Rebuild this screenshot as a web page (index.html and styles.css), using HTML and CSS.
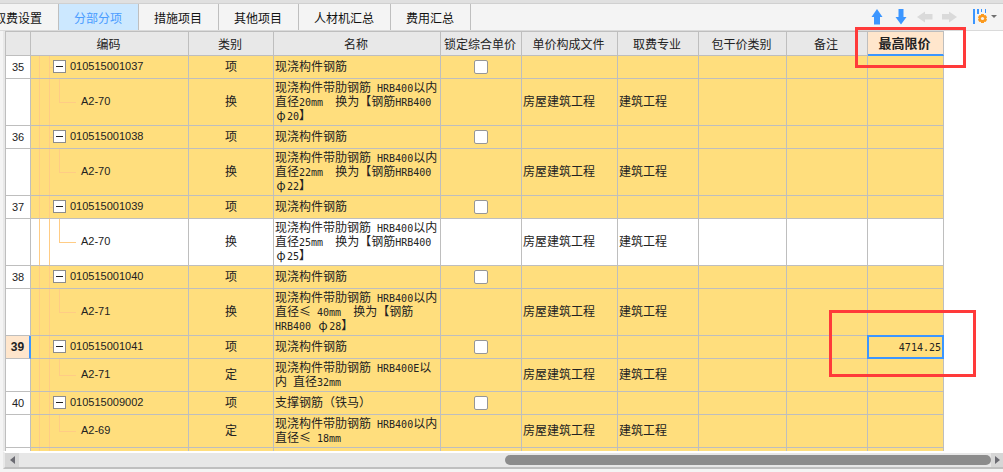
FILE: index.html
```html
<!DOCTYPE html>
<html lang="zh-CN">
<head>
<meta charset="utf-8">
<title>分部分项</title>
<link rel="stylesheet" href="styles.css">
</head>
<body>
<div class="app">
  <header class="toolbar">
    <nav class="tabs">
      <button class="tab">取费设置</button>
      <button class="tab active">分部分项</button>
      <button class="tab">措施项目</button>
      <button class="tab">其他项目</button>
      <button class="tab">人材机汇总</button>
      <button class="tab">费用汇总</button>
    </nav>
    <div class="tools">
      <button class="tool" aria-label="上移"><svg width="16" height="16" viewBox="0 0 16 16"><path fill="#3c96ff" d="M8 0 13.500 8H11v7.500H5V8H2.500z"/></svg></button>
      <button class="tool" aria-label="下移"><svg width="16" height="16" viewBox="0 0 16 16"><path fill="#3c96ff" d="M5.500 0h5v8h3L8 15.500 2.500 8h3z"/></svg></button>
      <button class="tool" aria-label="左移"><svg width="16" height="16" viewBox="0 0 16 16"><path fill="#dadada" d="M0 8 8 2.500V5h7.500v5.500H8V13.500z"/></svg></button>
      <button class="tool" aria-label="右移"><svg width="16" height="16" viewBox="0 0 16 16"><path fill="#dadada" d="M16 8 8 2.500V5H1v5.500H8V13.500z"/></svg></button>
      <button class="tool settings" aria-label="列设置"><svg width="24" height="16" viewBox="0 0 24 16"><path fill="#3c96ff" d="M0 0h2v15H0zM4 0h2v5H4zM8 0h1v3H8zM12 0h1v4h-1z"/><g fill="#fb9a1e"><circle cx="9.500" cy="9.500" r="3.800"/><path d="M8 5h3v9H8z"/><path d="M8 5h3v9H8z" transform="rotate(60 9.500 9.500)"/><path d="M8 5h3v9H8z" transform="rotate(120 9.500 9.500)"/></g><circle cx="9.500" cy="9.500" r="1.600" fill="#f4f4f4"/><path fill="#707070" d="M18 6h6l-3 3z"/></svg></button>
    </div>
  </header>

  <main class="sheet">
    <table class="grid">
      <colgroup>
        <col class="c-num"><col class="c-code"><col class="c-kind"><col class="c-name"><col class="c-lock"><col class="c-file"><col class="c-major"><col class="c-pack"><col class="c-note"><col class="c-limit">
      </colgroup>
      <thead>
        <tr><th></th><th>编码</th><th>类别</th><th>名称</th><th>锁定综合单价</th><th>单价构成文件</th><th>取费专业</th><th>包干价类别</th><th>备注</th><th class="current">最高限价</th></tr>
      </thead>
      <tbody>
        <tr class="item"><th>35</th><td class="code"><div class="entry"><button class="toggle" aria-label="折叠"></button>010515001037</div></td><td class="kind">项</td><td>现浇构件钢筋</td><td class="lock"><input type="checkbox" aria-label="锁定综合单价 35"></td><td></td><td></td><td></td><td></td><td></td></tr>
        <tr class="sub"><th></th><td class="code"><div class="entry">A2-70</div></td><td class="kind">换</td><td>现浇构件带肋钢筋<span class="mono"> HRB400</span>以内<br>直径<span class="mono">20mm  </span>换为【钢筋<span class="mono">HRB400</span><br><span class="phi">φ</span><span class="mono">20</span>】</td><td></td><td>房屋建筑工程</td><td>建筑工程</td><td></td><td></td><td></td></tr>
        <tr class="item"><th>36</th><td class="code"><div class="entry"><button class="toggle" aria-label="折叠"></button>010515001038</div></td><td class="kind">项</td><td>现浇构件钢筋</td><td class="lock"><input type="checkbox" aria-label="锁定综合单价 36"></td><td></td><td></td><td></td><td></td><td></td></tr>
        <tr class="sub"><th></th><td class="code"><div class="entry">A2-70</div></td><td class="kind">换</td><td>现浇构件带肋钢筋<span class="mono"> HRB400</span>以内<br>直径<span class="mono">22mm  </span>换为【钢筋<span class="mono">HRB400</span><br><span class="phi">φ</span><span class="mono">22</span>】</td><td></td><td>房屋建筑工程</td><td>建筑工程</td><td></td><td></td><td></td></tr>
        <tr class="item"><th>37</th><td class="code"><div class="entry"><button class="toggle" aria-label="折叠"></button>010515001039</div></td><td class="kind">项</td><td>现浇构件钢筋</td><td class="lock"><input type="checkbox" aria-label="锁定综合单价 37"></td><td></td><td></td><td></td><td></td><td></td></tr>
        <tr class="sub plain"><th></th><td class="code"><div class="entry">A2-70</div></td><td class="kind">换</td><td>现浇构件带肋钢筋<span class="mono"> HRB400</span>以内<br>直径<span class="mono">25mm  </span>换为【钢筋<span class="mono">HRB400</span><br><span class="phi">φ</span><span class="mono">25</span>】</td><td></td><td>房屋建筑工程</td><td>建筑工程</td><td></td><td></td><td></td></tr>
        <tr class="item"><th>38</th><td class="code"><div class="entry"><button class="toggle" aria-label="折叠"></button>010515001040</div></td><td class="kind">项</td><td>现浇构件钢筋</td><td class="lock"><input type="checkbox" aria-label="锁定综合单价 38"></td><td></td><td></td><td></td><td></td><td></td></tr>
        <tr class="sub"><th></th><td class="code"><div class="entry">A2-71</div></td><td class="kind">换</td><td>现浇构件带肋钢筋<span class="mono"> HRB400</span>以内<br>直径<span class="phi">≤</span><span class="mono"> 40mm  </span>换为【钢筋<br><span class="mono">HRB400 </span><span class="phi">φ</span><span class="mono">28</span>】</td><td></td><td>房屋建筑工程</td><td>建筑工程</td><td></td><td></td><td></td></tr>
        <tr class="item"><th class="current">39</th><td class="code"><div class="entry"><button class="toggle" aria-label="折叠"></button>010515001041</div></td><td class="kind">项</td><td>现浇构件钢筋</td><td class="lock"><input type="checkbox" aria-label="锁定综合单价 39"></td><td></td><td></td><td></td><td></td><td class="selected"><span class="mono">4714.25</span></td></tr>
        <tr class="sub"><th></th><td class="code"><div class="entry">A2-71</div></td><td class="kind">定</td><td>现浇构件带肋钢筋<span class="mono"> HRB400E</span>以<br>内<span class="mono"> </span>直径<span class="mono">32mm</span></td><td></td><td>房屋建筑工程</td><td>建筑工程</td><td></td><td></td><td></td></tr>
        <tr class="item"><th>40</th><td class="code"><div class="entry"><button class="toggle" aria-label="折叠"></button>010515009002</div></td><td class="kind">项</td><td>支撑钢筋（铁马）</td><td class="lock"><input type="checkbox" aria-label="锁定综合单价 40"></td><td></td><td></td><td></td><td></td><td></td></tr>
        <tr class="sub"><th></th><td class="code"><div class="entry">A2-69</div></td><td class="kind">定</td><td>现浇构件带肋钢筋<span class="mono"> HRB400</span>以内<br>直径<span class="phi">≤</span><span class="mono"> 18mm</span></td><td></td><td>房屋建筑工程</td><td>建筑工程</td><td></td><td></td><td></td></tr>
        <tr class="item"><th></th><td class="code"></td><td></td><td></td><td></td><td></td><td></td><td></td><td></td><td></td></tr>
      </tbody>
    </table>
  </main>

  <footer class="scrollbar">
    <button class="step" aria-label="向左滚动"><svg width="5" height="8" viewBox="0 0 5 8"><path fill="#6b6b72" d="M5 0v8L0 4z"/></svg></button>
    <div class="track"><div class="thumb"></div></div>
    <button class="step end" aria-label="向右滚动"><svg width="5" height="8" viewBox="0 0 5 8"><path fill="#6b6b72" d="M0 0v8l5-4z"/></svg></button>
  </footer>

  <div class="mark mark-head"></div>
  <div class="mark mark-cell"></div>
</div>
</body>
</html>
```
FILE: styles.css
```css
* {
  box-sizing: border-box;
}

body {
  margin: 0;
  background: #f4f4f4;
  color: #222;
  font: 12px/14px "Noto Sans CJK SC", sans-serif;
}

button {
  margin: 0;
  padding: 0;
  border: 0;
  background: none;
  color: inherit;
  font: inherit;
}

.app {
  position: relative;
  display: flex;
  flex-direction: column;
  height: 100vh;
  overflow: hidden;
  border-top: 3px solid #e0e0e0;
  padding-bottom: 3px;
}

.toolbar {
  display: flex;
  flex: none;
  justify-content: space-between;
  height: 28px;
  border-top: 1px solid #d0d0d0;
  border-bottom: 1px solid #dadada;
}

.tabs {
  display: flex;
  margin-left: -21px;
}

.tab {
  padding: 2px 16px 0 15px;
  border-right: 1px solid #bfbfbf;
  white-space: nowrap;
  color: #111;
}

.tab.active {
  background: #cce8ff;
  color: #4a9cff;
}

.tools {
  display: flex;
  align-items: center;
  gap: 8px;
  padding: 0 6px 0 0;
}

.tool {
  display: flex;
}

.settings {
  margin-left: 8px;
}

.sheet {
  flex: 1;
  min-height: 0;
  overflow: hidden;
  border-left: 3px solid #f4f4f4;
  background: #fff;
  box-shadow: inset 2px 0 #e8e8e8;
  padding-left: 2px;
}

.grid {
  width: 939px;
  table-layout: fixed;
  border-collapse: separate;
  border-spacing: 0;
  border-top: 1px solid #bebebe;
  border-left: 1px solid #bebebe;
}

.c-num { width: 25px; }
.c-code { width: 158px; }
.c-kind { width: 85px; }
.c-name { width: 167px; }
.c-lock { width: 81px; }
.c-file { width: 96px; }
.c-major { width: 81px; }
.c-pack { width: 88px; }
.c-note { width: 81px; }
.c-limit { width: 76px; }

.grid th,
.grid td {
  padding: 0 0 0 1px;
  border-right: 1px solid #bebebe;
  border-bottom: 1px solid #bebebe;
  text-align: left;
  vertical-align: middle;
  white-space: nowrap;
}

.grid th {
  padding: 0;
  text-align: center;
  font-weight: 400;
}

.grid thead th {
  height: 24px;
  padding-right: 2px;
  background: #e8e8e8;
}

.grid thead .current {
  border-bottom: 2px solid #3c96ff;
  background: #ffe6cc;
  font-size: 13px;
  font-weight: 700;
}

.grid tbody th {
  background: #fff;
  font-family: "Liberation Sans", sans-serif;
  font-size: 11px;
}

.grid tbody .current {
  border-right: 2px solid #3c96ff;
  background: #ffe6cc;
  font-size: 12px;
  font-weight: 700;
}

.grid tbody td {
  background-color: #ffde7d;
}

.grid tbody .plain td {
  background-color: #fff;
}

.grid .item td {
  height: 23px;
  padding-bottom: 2px;
}

.grid .sub td {
  padding-top: 1px;
  padding-bottom: 3px;
}

.grid .kind,
.grid .lock {
  padding-left: 0;
  text-align: center;
}

.grid .item .lock {
  padding-bottom: 0;
}

/* Tree guides: two trunk lines plus the branch that leads to each entry. */
.grid .code {
  --guide: linear-gradient(#ffcc85, #ffcc85);
  background-image: var(--guide), var(--guide), var(--guide);
  background-repeat: no-repeat;
  background-position: 8px 0, 18px 0, 18px 50%;
  background-size: 1px 100%, 1px 100%, 4px 1px;
}

.grid .item .code {
  padding-left: 22px;
}

.grid .sub .code {
  padding-left: 50px;
  background-image: var(--guide), var(--guide), var(--guide), var(--guide);
  background-position: 8px 0, 18px 0, 28px 0, 28px 50%;
  background-size: 1px 100%, 1px 100%, 1px 50%, 17px 1px;
}

.entry {
  display: flex;
  align-items: center;
  gap: 4px;
  font-family: "Liberation Sans", sans-serif;
  font-size: 11px;
}

.mono {
  font-family: "DejaVu Sans Mono", monospace;
  font-size: 10px;
  line-height: 1px;
  white-space: pre;
}

.phi {
  display: inline-block;
  width: 12px;
  line-height: 10px;
  text-align: center;
}

.toggle {
  flex: none;
  width: 13px;
  height: 13px;
  border: 1px solid #8c8c8c;
  background: linear-gradient(#222, #222) center / 7px 1px no-repeat #fff;
}

.lock input {
  display: block;
  width: 14px;
  height: 14px;
  margin: 0 auto;
  appearance: none;
  border: 1px solid #969696;
  border-radius: 2px;
  background: #fff;
}

.grid .selected {
  position: relative;
  padding-right: 2px;
  text-align: right;
}

.selected::after {
  content: "";
  position: absolute;
  inset: -1px;
  border: 2px solid #3c96ff;
}

.scrollbar {
  display: flex;
  flex: none;
  height: 18px;
  margin-left: 3px;
  border-top: 2px solid #fff;
  border-bottom: 2px solid #bfbfbf;
  border-left: 2px solid #e8e8e8;
  background: #e7e7e7;
}

.step {
  display: flex;
  align-items: center;
  justify-content: center;
  width: 14px;
  background: #d6d6d6;
}

.step.end {
  width: 12px;
}

.track {
  display: flex;
  flex: 1;
  justify-content: flex-end;
  align-items: center;
}

.thumb {
  width: 50%;
  height: 10px;
  border-radius: 5px;
  background: #8c8c8c;
}

/* Highlight frames laid over the sheet. */
.mark {
  position: absolute;
  border: 3px solid #ff3a3a;
  pointer-events: none;
}

.mark-head {
  left: 855px;
  top: 24px;
  width: 111px;
  height: 41px;
}

.mark-cell {
  left: 829px;
  top: 307px;
  width: 147px;
  height: 67px;
}
```
